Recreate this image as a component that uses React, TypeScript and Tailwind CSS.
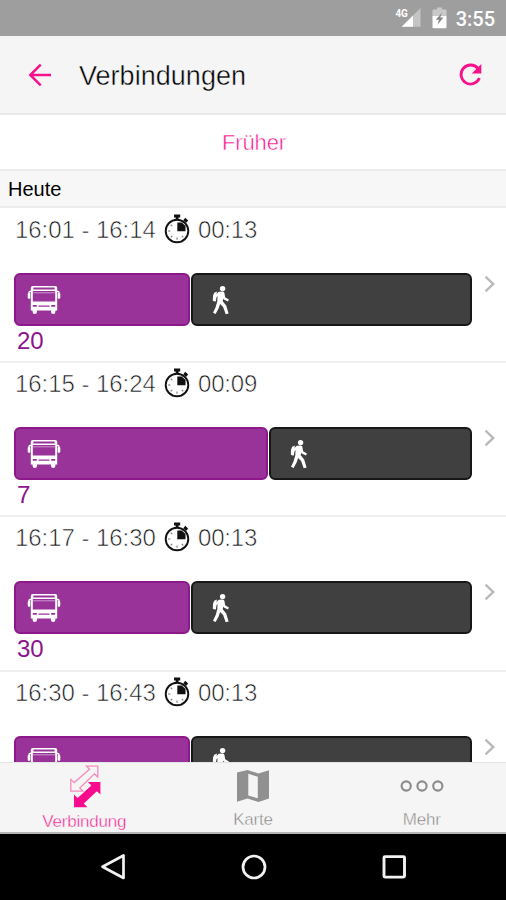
import type { ReactNode } from 'react';

interface Connection {
    start: string;
    end: string;
    duration: string;
    line?: string;
    busWidth: number;
}

const connections: Connection[] = [
    { start: '16:01', end: '16:14', duration: '00:13', line: '20', busWidth: 176 },
    { start: '16:15', end: '16:24', duration: '00:09', line: '7', busWidth: 254 },
    { start: '16:17', end: '16:30', duration: '00:13', line: '30', busWidth: 176 },
    { start: '16:30', end: '16:43', duration: '00:13', busWidth: 176 },
];

const StopwatchIcon = () => (
    <svg width="26" height="30" viewBox="0 0 26 30" fill="none" className="shrink-0">
        <circle cx="13" cy="17" r="11.3" stroke="#111" strokeWidth="1.9" />
        <path d="M10 0.6h6.2v2.9h-1.7v2.6h-2.8V3.5H10z" fill="#111" />
        <path d="M19.3 6.2l1.9-2.4 3 2.6-2 2.4z" fill="#111" />
        <path d="M13.3 17.3V8.5h4.5l3.7 3.5v5.3z" fill="#111" />
        <path d="M13 23.6v2.2M6.4 17H4M8.2 21.8l-1.5 1.5M17.8 21.8l1.5 1.5M8.2 12.2l-1.5-1.5" stroke="#777" strokeWidth="1.1" />
    </svg>
);

const BusIcon = () => (
    <svg width="34" height="30" viewBox="0 0 34 30" fill="none" className="shrink-0">
        <path
            fillRule="evenodd"
            fill="#fff"
            d="M5.8 1h22.4a2 2 0 0 1 2 2V25.5H28.4v1.3a2.2 2.2 0 0 1-4.4 0V25.5H10v1.3a2.2 2.2 0 0 1-4.4 0V25.5H3.8V3a2 2 0 0 1 2-2zM6.4 2.5v2h21.2v-2zM5.8 6v10.6h22.4V6zM5.8 20v1.8h4V20zM24.2 20v1.8h4V20zM11.5 20.4v1.4h11v-1.4z"
        />
        <path d="M6 7.8h22" stroke="#dcb2dc" strokeWidth="0.8" />
        <path d="M4.5 6.5H3a1 1 0 0 0-1 1v5M29.5 6.5H31a1 1 0 0 1 1 1v5" stroke="#fff" strokeWidth="1.3" />
        <path d="M2 9v3.6M32 9v3.6" stroke="#fff" strokeWidth="2.6" strokeLinecap="round" />
    </svg>
);

const WalkIcon = () => (
    <svg width="18" height="30" viewBox="0 0 18 30" fill="#fff" className="shrink-0">
        <circle cx="10.6" cy="3.6" r="2.7" />
        <path d="M6.8 6.7l3.8-.2c1 .1 1.6.7 1.8 1.6l.8 4.1 3.7 2.4-.9 2-4.3-2.2-.5-1-.5 2.8 3.5 4.2 2.4 8-2.9.8-2.6-7.2-3-3.1-1.5 4.6-3 5.4-2.6-1.2 2.6-5.5 1.7-6 .2-5.2-1.1 1.4-.5 4.1-2.1-.2.4-5.3z" />
        <path d="M2.2 7.8L5 6.6 3.9 12l-1.7 4.3-1.4-.5.2-5z" />
    </svg>
);

const ChevronIcon = () => (
    <svg width="12" height="18" viewBox="0 0 12 18" fill="none" stroke="#bababa" strokeWidth="2.4">
        <path d="M1.5 1.7L9.3 9l-7.8 7.3" />
    </svg>
);

const StatusBar = () => (
    <div className="flex h-9 shrink-0 items-center justify-end bg-[#9e9e9e] pr-[11px]">
        <svg width="27" height="22" viewBox="0 0 27 22" className="mr-[10px]">
            <path d="M25.5 1v18.8H6.7z" fill="#c4c4c4" />
            <path d="M18 8.5v11.3H6.7z" fill="#fff" />
            <text x="0.4" y="9.5" fill="#fff" fontFamily="Roboto, sans-serif" fontSize="11" fontWeight="700" textLength="12.5" lengthAdjust="spacingAndGlyphs">
                4G
            </text>
        </svg>
        <svg width="15" height="22" viewBox="0 0 15 22" className="mr-[9px]">
            <path d="M5 0.5h5v2h3.5q1 0 1 1V9H.5V3.5q0-1 1-1H5z" fill="#c9c9c9" />
            <path d="M.5 9h14v11.3q0 1-1 1h-12q-1 0-1-1z" fill="#fff" />
            <path d="M10.2 5.5L3.8 12.8h3.2l-1.5 5 5.9-7.4H8.2z" fill="#858585" />
        </svg>
        <span className="pt-[2px] font-['Roboto',sans-serif] text-[20px] font-medium leading-6 text-white">3:55</span>
    </div>
);

const Header = () => (
    <header className="flex h-[79px] shrink-0 items-center border-b-2 border-[#e9e9e9] bg-[#f5f5f5] pl-7 pr-[22px]">
        <svg width="24" height="24" viewBox="0 0 24 24" fill="none" stroke="#f7128b" strokeWidth="2.5">
            <path d="M23 12H3M12.7 1.6L2.3 12l10.4 10.4" />
        </svg>
        <h1 className="ml-[27px] flex-1 pt-[2px] text-[27px] leading-8 tracking-[0.03px] text-black [-webkit-text-stroke:0.45px_#f5f5f5]">
            Verbindungen
        </h1>
        <svg width="26" height="26" viewBox="0 0 26 26" fill="none">
            <path d="M20 6.6A9.5 9.5 0 1 0 21.4 16" stroke="#f7128b" strokeWidth="2.8" />
            <path d="M23.3 2v9.6H13.7z" fill="#f7128b" />
        </svg>
    </header>
);

const ConnectionRow = ({ start, end, duration, line, busWidth }: Connection) => (
    <li className="flex h-[154.2px] shrink-0 flex-col border-b-2 border-[#f0f0f0] pl-[14px]">
        <div className="flex h-[64px] items-start pt-[5px] text-[24px] leading-8 text-[#161616] [-webkit-text-stroke:0.65px_white]">
            <span className="w-[150px] whitespace-nowrap pl-px tracking-[-0.05px]">
                {start} - {end}
            </span>
            <StopwatchIcon />
            <span className="ml-[8px] tracking-[-0.2px]">{duration}</span>
        </div>
        <div className="flex">
            <div className="flex h-[53px] w-[458px] gap-px">
                <div
                    className="flex items-center rounded-md border-2 border-[#8c188c] bg-[#993399] pl-[11px]"
                    style={{ width: busWidth }}
                >
                    <BusIcon />
                </div>
                <div className="flex flex-1 items-center rounded-md border-2 border-[#171717] bg-[#404040] pl-[19px]">
                    <WalkIcon />
                </div>
            </div>
            <div className="ml-[12px] pt-[2px]">
                <ChevronIcon />
            </div>
        </div>
        {line && <div className="-mt-px pl-[3px] text-[24px] leading-8 text-[#8c148c]">{line}</div>}
    </li>
);

interface TabProps {
    label: string;
    active?: boolean;
    children: ReactNode;
}

const Tab = ({ label, active, children }: TabProps) => (
    <div className="flex flex-1 flex-col items-center">
        <div className="flex h-[46px] items-center">{children}</div>
        <span
            className={
                active
                    ? 'text-[17px] leading-[25px] tracking-[-0.2px] text-[#f7128b] [-webkit-text-stroke:0.45px_#f5f5f5]'
                    : 'text-[17px] leading-[25px] tracking-[-0.2px] text-[#808080] [-webkit-text-stroke:0.45px_#f5f5f5]'
            }
        >
            {label}
        </span>
    </div>
);

const TabBar = () => (
    <nav className="flex h-[72px] shrink-0 border-b-2 border-t border-b-[#b5b5b5] border-t-[#e4e4e4] bg-[#f5f5f5]">
        <Tab label="Verbindung" active>
            <svg width="34" height="46" viewBox="0 0 34 46" className="ml-[4px]">
                <path
                    d="M17.5 3.2H28.8V14L25.4 10.9 10.8 25 14 28.2H1.8V16.4L5.2 19.6 20.6 6.2z"
                    fill="none"
                    stroke="#f78abd"
                    strokeWidth="1.3"
                />
                <path d="M18.8 19H31.4V31.4L27.9 28.2 14.8 40.4 18.4 44.2H5V31.6L8.6 35 22.4 22.5z" fill="#fa0a8c" />
            </svg>
        </Tab>
        <Tab label="Karte">
            <svg width="34" height="34" viewBox="0 0 34 34" fill="#909090" className="mt-[1px]">
                <path fillRule="evenodd" d="M1 3.5L11.5 1 22.5 4.5 33 1.2V29.5L22.5 33 11.5 29.5 1 32.8zM12.3 4.8V26.4L21.8 29.3V7.8z" />
            </svg>
        </Tab>
        <Tab label="Mehr">
            <svg width="44" height="14" viewBox="0 0 44 14" fill="none" stroke="#8b8b8b" strokeWidth="2.1" className="mt-[1px]">
                <circle cx="6.2" cy="7" r="4.6" />
                <circle cx="22" cy="7" r="4.6" />
                <circle cx="37.8" cy="7" r="4.6" />
            </svg>
        </Tab>
    </nav>
);

const SystemNav = () => (
    <div className="flex h-[66px] shrink-0 items-center justify-between bg-black pl-[100px] pr-[98px]">
        <svg width="28" height="28" viewBox="0 0 28 28" fill="none" stroke="#f2f2f2" strokeWidth="2.7" strokeLinejoin="round">
            <path d="M23.5 2.5v22.5L2.5 13.7z" />
        </svg>
        <svg width="28" height="28" viewBox="0 0 28 28" fill="none" stroke="#f2f2f2" strokeWidth="2.7">
            <circle cx="14" cy="14" r="11" />
        </svg>
        <svg width="28" height="28" viewBox="0 0 28 28" fill="none" stroke="#f2f2f2" strokeWidth="2.9">
            <rect x="4" y="3.6" width="20.5" height="20.5" rx="1" />
        </svg>
    </div>
);

export default function App() {
    return (
        <div className="flex h-[900px] w-[506px] flex-col overflow-hidden bg-white font-['Liberation_Sans',Arial,sans-serif]">
            <StatusBar />
            <Header />
            <main className="flex min-h-0 flex-1 flex-col overflow-hidden">
                <button className="h-[54px] shrink-0 pl-[2px] text-[22px] leading-[56px] tracking-[-0.1px] text-[#f7128b] [-webkit-text-stroke:0.5px_white]">
                    Früher
                </button>
                <h2 className="h-[39px] shrink-0 border-b-2 border-t-2 border-[#ececec] bg-[#f7f7f7] pl-2 text-[20px] leading-[36px] text-black">
                    Heute
                </h2>
                <ul className="flex flex-col pt-px">
                    {connections.map((connection) => (
                        <ConnectionRow key={connection.start} {...connection} />
                    ))}
                </ul>
            </main>
            <TabBar />
            <SystemNav />
        </div>
    );
}
